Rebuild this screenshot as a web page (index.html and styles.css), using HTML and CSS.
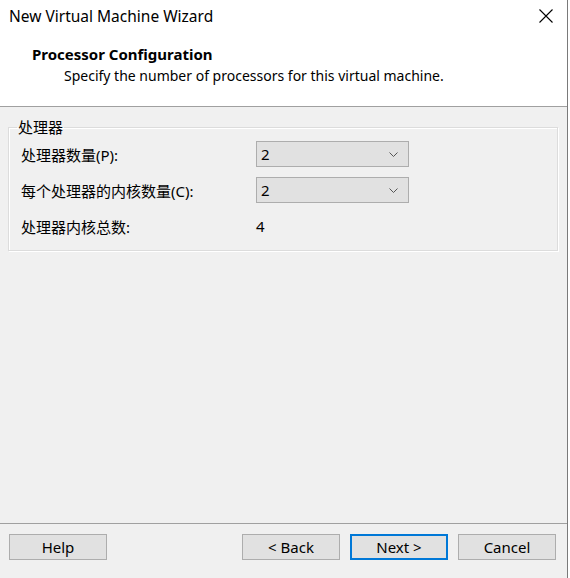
FILE: index.html
```html
<!DOCTYPE html>
<html lang="en">
<head>
    <meta charset="UTF-8">
    <title>New Virtual Machine Wizard</title>
    <link rel="stylesheet" href="styles.css">
</head>
<body>
    <div class="dialog">
        <div class="head">
            <div class="titlebar">
                <span class="title">New Virtual Machine Wizard</span>
                <svg class="close" width="14" height="14" viewBox="0 0 14 14">
                    <path d="M0.5 0.5 L13.5 13.5 M13.5 0.5 L0.5 13.5" stroke="#000" stroke-width="1.1" fill="none"/>
                </svg>
            </div>
            <h1>Processor Configuration</h1>
            <p>Specify the number of processors for this virtual machine.</p>
        </div>

        <div class="content">
            <fieldset class="group">
                <legend>处理器</legend>
                <div class="row">
                    <label>处理器数量(P):</label>
                    <div class="combo">
                        <span>2</span>
                        <svg width="9" height="5" viewBox="0 0 9 5"><path d="M0.5 0.5 L4.5 4.5 L8.5 0.5" stroke="#555" fill="none"/></svg>
                    </div>
                </div>
                <div class="row">
                    <label>每个处理器的内核数量(C):</label>
                    <div class="combo">
                        <span>2</span>
                        <svg width="9" height="5" viewBox="0 0 9 5"><path d="M0.5 0.5 L4.5 4.5 L8.5 0.5" stroke="#555" fill="none"/></svg>
                    </div>
                </div>
                <div class="row">
                    <label>处理器内核总数:</label>
                    <span class="value">4</span>
                </div>
            </fieldset>
        </div>

        <div class="footer">
            <button>Help</button>
            <div class="nav">
                <button>&lt; Back</button>
                <button class="default">Next &gt;</button>
                <button>Cancel</button>
            </div>
        </div>
    </div>
</body>
</html>
```

FILE: styles.css
```css
/* wizard dialog */
body { margin: 0; background: #fff; font-family: "Noto Sans", "Noto Sans CJK SC", sans-serif; font-size: 15px; color: #000; }
.dialog { width: 567px; height: 578px; border-right: 1px solid #7a7a7a; background: #f0f0f0; display: flex; flex-direction: column; }

.head { background: #fff; height: 106px; border-bottom: 1px solid #a0a0a0; }
.titlebar { display: flex; justify-content: space-between; align-items: center; height: 32px; padding: 0 14px 0 9px; }
.title { font-size: 15.5px; }
.head h1 { margin: 12px 0 0 32px; font-size: 15px; font-weight: bold; line-height: 20px; }
.head p { margin: 2px 0 0 64px; font-size: 14px; line-height: 20px; }

.content { flex: 1; padding: 10px 9px 0 8px; }
.group { margin: 0; padding: 4px 8px 11px 8px; border: 1px solid #dcdcdc; box-shadow: inset 1px 1px 0 #fff, 1px 1px 0 #fff; display: flex; flex-direction: column; gap: 10px; }
.group legend { padding: 0 1px; line-height: 20px; font-size: 15px; }
.row { display: flex; align-items: center; height: 26px; padding-left: 4px; }
.row label { width: 235px; font-size: 15px; }
.combo { width: 153px; height: 26px; border: 1px solid #adadad; background: #e1e1e1; display: flex; align-items: center; justify-content: space-between; padding: 0 10px 0 4px; box-sizing: border-box; }

.footer { height: 44px; border-top: 1px solid #a0a0a0; display: flex; justify-content: space-between; align-items: flex-start; padding: 10px 11px 0 9px; }
.nav { display: flex; gap: 10px; }
.footer button { width: 98px; height: 26px; background: #e1e1e1; border: 1px solid #adadad; font-family: inherit; font-size: 15px; padding: 0; color: #000; }
.footer button.default { border: 2px solid #0078d7; }
```
